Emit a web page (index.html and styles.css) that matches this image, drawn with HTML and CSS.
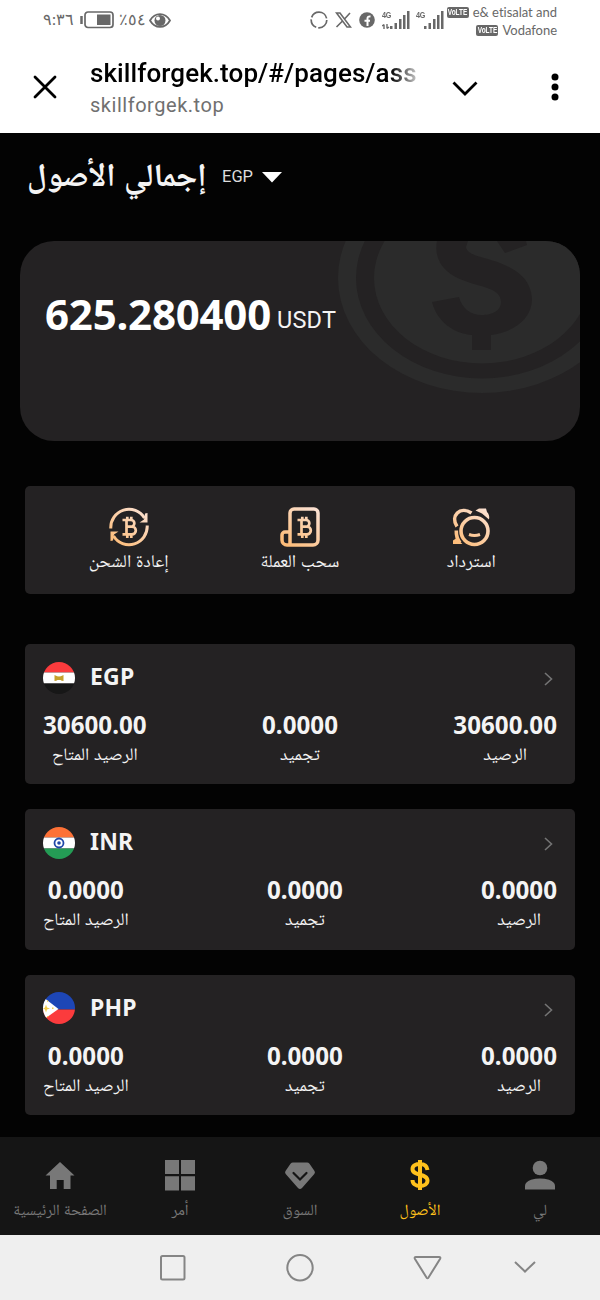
FILE: index.html
```html
<!DOCTYPE html>
<html lang="ar">
<head>
<meta charset="utf-8">
<title>إجمالي الأصول</title>
<link rel="stylesheet" href="styles.css">
</head>
<body>
<svg class="defs" width="0" height="0">
  <defs>
    <linearGradient id="peach" gradientUnits="userSpaceOnUse" x1="34" y1="2" x2="6" y2="38"><stop offset="0" stop-color="#fbe0d0"/><stop offset="1" stop-color="#fdbc78"/></linearGradient>
    <g id="btc" fill="none" stroke-width="2.7"><path d="M13.500 13h8.500a3.300 3.300 0 0 1 0 6.700h-4h5a3.800 3.800 0 0 1 0 7.600h-9.500M17.500 13v14M18.300 9.800v3.200M22.300 9.800v3.200M18.300 27.500v3.400M22.300 27.500v3.400"/></g>
    <g id="signal"><path d="M0 18h2.500v-3H0zM4.500 18H7v-6H4.500zM9 18h2.500V8H9zM13 18h2.500V4H13zM17 18h2.500V0H17z"/></g>
  </defs>
</svg>

<header class="status">
  <div class="status-left">
    <span class="clock">٩:٣٦</span>
    <svg class="battery" width="34" height="18" viewBox="0 0 34 18"><path d="M1.500 5v8" stroke="#686868" stroke-width="2.500"/><rect x="5" y="1" width="28" height="15.500" rx="3" fill="none" stroke="#686868" stroke-width="1.700"/><rect x="17" y="3.500" width="13.500" height="10.500" fill="#686868"/></svg>
    <span class="percent"><bdo dir="ltr">٪٥٤</bdo></span>
    <svg class="eye" width="22" height="15" viewBox="0 0 22 15"><path d="M1 7.500C6-1 16-1 21 7.500C16 16 6 16 1 7.500z" fill="none" stroke="#686868" stroke-width="1.800"/><circle cx="11" cy="7.500" r="5.500" fill="#686868"/><circle cx="9" cy="5.500" r="2" fill="#fff"/></svg>
  </div>
  <div class="status-icons">
    <svg width="18" height="18" viewBox="0 0 18 18"><circle cx="9" cy="9" r="7.800" fill="none" stroke="#686868" stroke-width="1.700" stroke-dasharray="13 2 10 2 20 2"/></svg>
    <svg width="17" height="16" viewBox="0 0 17 16"><path d="M1.500 1h3.500l10.500 14H12zM15 1L9.500 7M7 9.500L1.500 15" fill="none" stroke="#686868" stroke-width="1.600"/></svg>
    <svg width="16" height="16" viewBox="0 0 16 16"><circle cx="8" cy="8" r="7.800" fill="#686868"/><path d="M8.500 14V6.500q0-2.500 3-2M5.500 8.800h5.500" fill="none" stroke="#fff" stroke-width="2"/></svg>
    <div class="net"><b>4G</b><svg width="28" height="18" viewBox="-8 0 28 18" fill="#686868"><use href="#signal"/><path d="M-6 18v-4.500M-8 15l2-1.500M-3 13v4.500M-3 17.500l2-1.500" stroke="#686868" stroke-width="1.400"/></svg></div>
    <div class="net"><b>4G</b><svg width="28" height="18" viewBox="-8 0 28 18" fill="#686868"><use href="#signal"/></svg></div>
  </div>
  <div class="carriers">
    <div><b class="volte"><i>VoLTE</i></b><span>e&amp; etisalat and</span></div>
    <div><b class="volte"><i>VoLTE</i></b><span>Vodafone</span></div>
  </div>
</header>

<section class="browser">
  <svg class="close" width="24" height="24" viewBox="0 0 24 24"><path d="M2 2l20 20M22 2L2 22" stroke="#000" stroke-width="2.800" stroke-linecap="round"/></svg>
  <div class="address">
    <div class="url">skillforgek.top/#/pages/ass</div>
    <div class="host">skillforgek.top</div>
  </div>
  <svg class="expand" width="26" height="16" viewBox="0 0 26 16"><path d="M1.500 1.500L13 13L24.500 1.500" fill="none" stroke="#000" stroke-width="2.800"/></svg>
  <svg class="more" width="8" height="28" viewBox="0 0 8 28"><circle cx="4" cy="4" r="3.500"/><circle cx="4" cy="14" r="3.500"/><circle cx="4" cy="24" r="3.500"/></svg>
</section>

<main>
  <div class="heading">
    <h1>إجمالي الأصول</h1>
    <span class="currency">EGP</span>
    <svg width="20" height="11" viewBox="0 0 20 11"><path d="M0 0h20L10 10.500z" fill="#fff"/></svg>
  </div>

  <section class="total">
    <svg class="coin" width="560" height="200" viewBox="20 241 560 200">
      <g fill="#2b2b2b"><path fill-rule="evenodd" d="M338 278a144 115 0 1 0 288 0a144 115 0 1 0-288 0M356 278a126 100.500 0 1 0 252 0a126 100.500 0 1 0-252 0"/><ellipse cx="482" cy="278" rx="108" ry="85.500"/></g>
      <path fill="#242223" d="M437 241C433 262 447 275 465 281C485 288 501 289 501 302C501 312 490 315 482 315C470 315 462 308 459 297L432 302C437 322 455 334 472 335V350H491V335C515 332 532 318 532 299C531 278 515 269 500 263C485 257 467 256 466 247L468 241zM497 241L505 253L527 245L526 241z"/>
    </svg>
    <div class="amount"><strong>625.280400</strong><span>USDT</span></div>
  </section>

  <section class="actions">
    <div class="action">
      <svg width="40" height="40" viewBox="0 0 40 40" fill="none" stroke="url(#peach)" stroke-width="3"><path d="M1.800 21.500A18.200 18.200 0 0 1 35.500 11M38.200 18.500A18.200 18.200 0 0 1 4.500 29"/><path d="M36 6.500l2.500-.5v9.500h-8l4.500-3zM4 33.500l-2.500.5v-9.500h8L5 27.500z" fill="url(#peach)" stroke="none"/><use href="#btc"/></svg>
      <span>إعادة الشحن</span>
    </div>
    <div class="action">
      <svg width="40" height="40" viewBox="0 0 40 40" fill="none" stroke="url(#peach)" stroke-width="3.500"><path d="M10 38V6a4 4 0 0 1 4-4h20a4 4 0 0 1 4 4v27a5 5 0 0 1-5 5H7a5 5 0 0 1-5-5v-5a3 3 0 0 1 3-3h5"/><g transform="translate(4)"><use href="#btc"/></g></svg>
      <span>سحب العملة</span>
    </div>
    <div class="action">
      <svg width="40" height="40" viewBox="0 0 40 40" fill="none" stroke="url(#peach)" stroke-width="3.600"><circle cx="23.500" cy="24" r="13.500"/><path d="M18 27.500q5.500 2 11 0" stroke-width="3"/><path d="M6 19.500C-1 9 9 -1.500 20.500 6M5.300 23.500q-.3 7 3.700 12.500"/><path d="M2 37v-3.500l3-2 6.500 5.500zM24.500 3.500l3.500-2h7l1 3.500q3 3 2 7.500l-7-6z" fill="url(#peach)" stroke="none"/></svg>
      <span>استرداد</span>
    </div>
  </section>

  <section class="wallets">
    <article class="wallet">
      <div class="wallet-head">
        <svg width="32" height="32" viewBox="0 0 32 32"><clipPath id="c"><circle cx="16" cy="16" r="16"/></clipPath><g clip-path="url(#c)"><path fill="#fb3b3d" d="M0 0h32v10.500H0z"/><path fill="#fff" d="M0 10.500h32v11H0z"/><path fill="#171717" d="M0 21.500h32V32H0z"/><path fill="#c5a12c" d="M11.500 13q3 1.500 4.500 1.500t4.500-1.500v6q-2 0-3-1h-3q-1 1-3 1z"/></g></svg>
        <h2>EGP</h2>
        <svg class="go" width="9" height="14" viewBox="0 0 9 14"><path d="M1 1l6.500 6L1 13"/></svg>
      </div>
      <div class="figures">
        <div><b>30600.00</b><span>الرصيد المتاح</span></div>
        <div><b>0.0000</b><span>تجميد</span></div>
        <div><b>30600.00</b><span>الرصيد</span></div>
      </div>
    </article>
    <article class="wallet">
      <div class="wallet-head">
        <svg width="32" height="32" viewBox="0 0 32 32"><g clip-path="url(#c)"><path fill="#fd7136" d="M0 0h32v10.500H0z"/><path fill="#fff" d="M0 10.500h32v11H0z"/><path fill="#249c55" d="M0 21.500h32V32H0z"/><circle cx="16" cy="16" r="4.500" fill="#fff" stroke="#2148a8" stroke-width="1.800"/><circle cx="16" cy="16" r="1.800" fill="#2148a8"/></g></svg>
        <h2>INR</h2>
        <svg class="go" width="9" height="14" viewBox="0 0 9 14"><path d="M1 1l6.500 6L1 13"/></svg>
      </div>
      <div class="figures">
        <div><b>0.0000</b><span>الرصيد المتاح</span></div>
        <div><b>0.0000</b><span>تجميد</span></div>
        <div><b>0.0000</b><span>الرصيد</span></div>
      </div>
    </article>
    <article class="wallet">
      <div class="wallet-head">
        <svg width="32" height="32" viewBox="0 0 32 32"><g clip-path="url(#c)"><path fill="#1d46b6" d="M0 0h32v17.500H0z"/><path fill="#fb3b3d" d="M0 17.500h32V32H0z"/><path fill="#fff" d="M0 5l15.500 12L0 28z"/><path fill="#f3cd4c" d="M3 12.500l1 3 3 1-3 1-1 3-1-3-2-1 2-1zM9 15.500h1.500v1.500H9zM4 8.500h1.200v1.200H4zM4 24h1.200v1.200H4z"/></g></svg>
        <h2>PHP</h2>
        <svg class="go" width="9" height="14" viewBox="0 0 9 14"><path d="M1 1l6.500 6L1 13"/></svg>
      </div>
      <div class="figures">
        <div><b>0.0000</b><span>الرصيد المتاح</span></div>
        <div><b>0.0000</b><span>تجميد</span></div>
        <div><b>0.0000</b><span>الرصيد</span></div>
      </div>
    </article>
  </section>
</main>

<nav class="tabs">
  <div class="tab"><svg width="32" height="32" viewBox="0 0 32 32"><path d="M16 3L30.500 16.500H26.500V30h-6.800v-9h-7v9H6V16.500H1.500z"/></svg><span>الصفحة الرئيسية</span></div>
  <div class="tab"><svg width="32" height="32" viewBox="0 0 32 32"><path d="M1 1h14v14H1zM17 1h14v14H17zM1 17.300h14V31.500H1zM17 17.300h14V31.500H17z"/></svg><span>أمر</span></div>
  <div class="tab"><svg width="32" height="32" viewBox="0 0 32 32"><path d="M9 3.500h14q1.500 0 2.500 1.200l5 7.300q1 1.500-.2 3L18 29q-2 2-4 0L1.700 15q-1.200-1.500-.2-3l5-7.300q1-1.200 2.500-1.200z"/><path d="M9.500 14l6.500 6.500 6.500-6.500" fill="none" stroke="#151515" stroke-width="2.200" stroke-linecap="round"/></svg><span>السوق</span></div>
  <div class="tab active"><svg width="32" height="32" viewBox="0 0 32 32"><path d="M23.500 11C23 7 20 5 16 5S8.500 6.500 8.500 10c0 7.500 15 4 15 11.500 0 3.500-3.500 5.500-7.500 5.500s-7.500-2-7.500-6M16 1v30" fill="none" stroke="#ffc11c" stroke-width="4"/></svg><span>الأصول</span></div>
  <div class="tab"><svg width="32" height="32" viewBox="0 0 32 32"><circle cx="16" cy="9" r="7.300"/><path d="M1 30.500V27q0-4 6-6.200 9-2.800 18 0Q31 23 31 27v3.500z"/></svg><span>لي</span></div>
</nav>

<footer class="system">
  <svg width="600" height="65" viewBox="0 0 600 65" fill="none" stroke="#858585" stroke-width="2"><rect x="161" y="21" width="23.500" height="23.500" rx="1.500"/><circle cx="300" cy="32.700" r="12.700"/><path d="M416 22h23q2 0 1 2l-11.500 18.500q-1 1.500-2 0L415 24q-1-2 1-2zM515 27l10 9.500L535 27"/></svg>
</footer>
</body>
</html>
```
FILE: styles.css
```css
* { box-sizing: border-box; }
body { margin: 0; width: 600px; height: 1300px; display: flex; flex-direction: column; background: #030303; color: #f4f4f4; font-family: "Noto Sans", "Noto Naskh Arabic", sans-serif; overflow: hidden; }
svg { display: block; flex: none; }
h1, h2 { margin: 0; }
.defs { height: 0; }
.status { height: 40px; background: #fff; color: #686868; display: flex; font-family: Lato, "Noto Sans", sans-serif; white-space: nowrap; }
.status-left { display: flex; align-items: center; gap: 5px; width: 310px; flex: none; padding-left: 43px; }
.clock { width: 32px; font-size: 16px; line-height: 20px; margin-top: -3px; }
.percent { width: 26px; font-size: 16px; line-height: 20px; margin-top: -3px; }
.eye { margin-left: -1px; }
.status-icons { display: flex; align-items: center; gap: 7px; width: 133px; flex: none; }
.net { position: relative; }
.net b { position: absolute; left: 0; top: 0; font: bold 9px/9px "Liberation Sans", sans-serif; letter-spacing: -.3px; transform: scaleX(.8); transform-origin: left; }
.net + .net { margin-left: -1px; }
.carriers { width: 114px; padding-top: 3px; font-size: 13px; line-height: 18px; }
.carriers div { display: flex; justify-content: flex-end; align-items: center; gap: 4px; }
.carriers span { letter-spacing: -.02px; }
.volte { width: 22px; height: 11px; border-radius: 2px; background: #686868; color: #fff; display: flex; justify-content: center; }
.volte i { font: bold 9px/11px "Liberation Sans", sans-serif; transform: scaleX(.72); }
.browser { height: 93px; background: #fff; color: #000; display: flex; align-items: flex-start; font-family: Roboto, sans-serif; }
.close { margin: 35px 0 0 33px; }
.address { width: 334px; margin-left: 33px; padding-top: 17px; }
.url { white-space: nowrap; font-size: 26px; line-height: 33px; font-weight: 500; letter-spacing: .08px; -webkit-mask-image: linear-gradient(90deg, #000 90%, transparent); mask-image: linear-gradient(90deg, #000 90%, transparent); }
.host { color: #707070; font-size: 20px; line-height: 30px; letter-spacing: .53px; }
.expand { margin: 41px 0 0 28px; }
.more { margin: 33px 0 0 73px; }
main { height: 1004px; padding: 0 20px; }
.heading { display: flex; align-items: center; height: 88px; padding-left: 7px; }
.heading h1 { width: 179px; font-size: 32.500px; line-height: 40px; margin-top: -7px; white-space: nowrap; }
.currency { width: 32px; margin: -2px 8px 0 16px; font-family: Roboto, sans-serif; font-size: 16.500px; color: #ddd; }
.total { position: relative; height: 200px; margin-top: 20px; overflow: hidden; border-radius: 34px; background: #242223; }
.coin { position: absolute; inset: 0; }
.amount { position: relative; display: flex; align-items: baseline; gap: 6px; padding: 44px 0 0 25px; line-height: 58px; }
.amount strong { font-size: 42px; width: 226px; letter-spacing: -.2px; color: #fff; }
.amount span { font-family: Roboto, sans-serif; font-size: 23.500px; line-height: 30px; position: relative; top: -2px; letter-spacing: .2px; }
.actions { height: 108px; margin: 45px 5px 0; padding: 21px 18px 0; border-radius: 5px; background: #242223; display: grid; grid-template-columns: repeat(3, 1fr); }
.action { display: flex; flex-direction: column; align-items: center; }
.action span { font-size: 18px; line-height: 28px; margin-top: -1px; white-space: nowrap; }
.wallets { display: grid; gap: 25px; margin: 50px 5px 0; }
.wallet { height: 140.400px; border-radius: 5px; background: #242223; padding: 0 18px; }
.wallet-head { height: 67px; display: flex; align-items: center; }
.wallet-head h2 { margin: -3px 0 0 15px; font-size: 23px; line-height: 30px; letter-spacing: .2px; }
.go { margin: 3px 4px 0 auto; fill: none; stroke: #747474; stroke-width: 1.600; }
.figures { display: flex; justify-content: space-between; text-align: center; }
.figures div { display: flex; flex-direction: column; align-items: center; }
.figures b { font-size: 24.200px; line-height: 28px; }
.figures span { font-size: 17.700px; line-height: 30px; white-space: nowrap; margin-top: -1px; }
.tabs { height: 98px; background: #151515; display: grid; grid-template-columns: repeat(5, 120px); }
.tab { display: flex; flex-direction: column; align-items: center; padding-top: 22px; color: #787878; fill: #787878; font-size: 15.700px; white-space: nowrap; }
.tab span { line-height: 40px; margin-top: -2px; }
.tab.active { color: #ffc11c; }
.system { height: 65px; background: #efefef; }
```
